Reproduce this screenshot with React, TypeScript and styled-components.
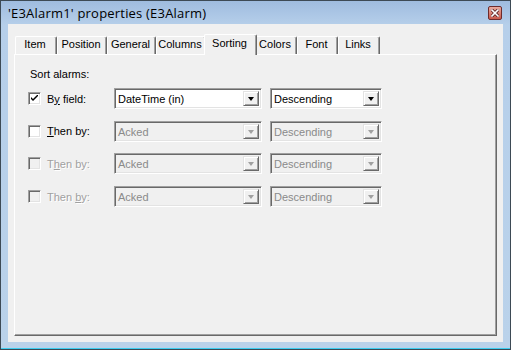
import React from 'react';
import styled, { createGlobalStyle, css } from 'styled-components';

const GlobalStyle = createGlobalStyle`
  body {
    margin: 0;
    background: #ffffff;
  }
`;

const Window = styled.div`
  box-sizing: border-box;
  width: 511px;
  height: 350px;
  border: 1px solid #3d4a55;
  background: linear-gradient(to bottom, #9fbcdf 0px, #b6cfea 24px, #bad2ea 100%);
  box-shadow: inset 0 -1px 0 #3ccdf0;
  display: flex;
  flex-direction: column;
`;

const TitleBar = styled.div`
  height: 23px;
  display: flex;
  align-items: center;
  justify-content: space-between;
  padding: 0 8px 0 7px;
`;

const Title = styled.span`
  font-family: 'Open Sans', 'Noto Sans', sans-serif;
  font-size: 13px;
  letter-spacing: 0.2px;
  color: #000;
  margin-top: 1px;
`;

const CloseButton = styled.div`
  width: 14px;
  height: 14px;
  box-sizing: border-box;
  border: 1px solid #6e2b2b;
  border-radius: 2px;
  background: linear-gradient(to bottom, #e9aa9e, #c95a4c);
  display: flex;
  align-items: center;
  justify-content: center;
  margin-top: 1px;
`;

const Client = styled.div`
  flex: 1;
  margin: 0 7px 7px 7px;
  background: #f0f0f0;
  padding: 10px 6px 6px 6px;
  display: flex;
  flex-direction: column;
`;

const TabStrip = styled.div`
  height: 20px;
  display: flex;
  align-items: flex-end;
  padding-left: 1px;
  position: relative;
  z-index: 1;
`;

const Tab = styled.div<{ $width: number; $active?: boolean }>`
  box-sizing: border-box;
  width: ${(p) => p.$width}px;
  height: 18px;
  border-top: 1px solid #ffffff;
  border-left: 1px solid #ffffff;
  border-right: 1px solid #696969;
  border-radius: 2px 2px 0 0;
  box-shadow: inset -1px 0 0 #a0a0a0;
  background: #f0f0f0;
  font-family: 'Liberation Sans', Arial, sans-serif;
  font-size: 11px;
  color: #000;
  text-align: center;
  line-height: 15px;
  padding-right: 2px;
  ${(p) =>
    p.$active &&
    css`
      width: ${p.$width + 4}px;
      height: 21px;
      margin: 0 -2px -1px -2px;
      line-height: 16px;
      position: relative;
    `}
`;

const Panel = styled.div`
  flex: 1;
  border: 1px solid;
  border-color: #ffffff #696969 #696969 #ffffff;
  box-shadow: inset -1px -1px 0 #a0a0a0;
  padding: 13px 0 0 15px;
  display: flex;
  flex-direction: column;
  font-family: 'Liberation Sans', Arial, sans-serif;
  font-size: 11px;
  color: #000;
`;

const SectionLabel = styled.div`
  line-height: 13px;
  margin-bottom: 7px;
`;

const Rows = styled.div`
  display: flex;
  flex-direction: column;
  gap: 11.7px;
  margin-left: -2px;
`;

const Row = styled.div`
  display: grid;
  grid-template-columns: 13px 73px 148px 120px;
  align-items: center;
  height: 21px;
`;

const sunken = css`
  box-sizing: border-box;
  border: 1px solid;
  border-color: #a0a0a0 #ffffff #ffffff #a0a0a0;
  box-shadow: inset 1px 1px 0 #696969, inset -1px -1px 0 #e3e3e3;
`;

const CheckBox = styled.div<{ $disabled?: boolean }>`
  ${sunken};
  width: 13px;
  height: 13px;
  background: ${(p) => (p.$disabled ? '#f0f0f0' : '#ffffff')};
  display: flex;
  align-items: center;
  justify-content: center;
`;

const Label = styled.label<{ $disabled?: boolean }>`
  margin-left: 6px;
  white-space: nowrap;
  color: ${(p) => (p.$disabled ? '#a0a0a0' : '#000000')};
  text-shadow: ${(p) => (p.$disabled ? '1px 1px 0 #ffffff' : 'none')};
`;

const Combo = styled.div<{ $disabled?: boolean }>`
  ${sunken};
  height: 21px;
  padding: 2px;
  display: flex;
  align-items: stretch;
  background: ${(p) => (p.$disabled ? '#f0f0f0' : '#ffffff')};
  color: ${(p) => (p.$disabled ? '#8a8a8a' : '#000000')};
  & + & {
    margin-left: 8px;
  }
`;

const ComboText = styled.span`
  flex: 1;
  padding-left: 1px;
  line-height: 17px;
  white-space: nowrap;
  overflow: hidden;
`;

const DropButton = styled.div<{ $disabled?: boolean }>`
  box-sizing: border-box;
  width: 16px;
  border: 1px solid;
  border-color: #e3e3e3 #696969 #696969 #e3e3e3;
  box-shadow: inset 1px 1px 0 #ffffff, inset -1px -1px 0 #a0a0a0;
  background: #f0f0f0;
  display: flex;
  align-items: center;
  justify-content: center;
  &::after {
    content: '';
    width: 0;
    height: 0;
    border-left: 3.5px solid transparent;
    border-right: 3.5px solid transparent;
    border-top: 4px solid ${(p) => (p.$disabled ? '#a0a0a0' : '#000000')};
    margin-top: 1px;
  }
`;

const tabs = [
  { name: 'Item', width: 42 },
  { name: 'Position', width: 50 },
  { name: 'General', width: 49 },
  { name: 'Columns', width: 50 },
  { name: 'Sorting', width: 49, active: true },
  { name: 'Colors', width: 42 },
  { name: 'Font', width: 41 },
  { name: 'Links', width: 42 }
];

interface SortRow {
  label: React.ReactNode;
  checked: boolean;
  checkDisabled: boolean;
  comboDisabled: boolean;
  field: string;
}

const rows: SortRow[] = [
  { label: <>B<u>y</u> field:</>, checked: true, checkDisabled: false, comboDisabled: false, field: 'DateTime (in)' },
  { label: <><u>T</u>hen by:</>, checked: false, checkDisabled: false, comboDisabled: true, field: 'Acked' },
  { label: <>T<u>h</u>en by:</>, checked: false, checkDisabled: true, comboDisabled: true, field: 'Acked' },
  { label: <>Then <u>b</u>y:</>, checked: false, checkDisabled: true, comboDisabled: true, field: 'Acked' }
];

function CheckMark() {
  return (
    <svg width="7" height="7" viewBox="0 0 7 7">
      <path d="M0 2 L0 4 L2 6 L7 1 L7 -1 L2 4 Z" fill="#000" />
    </svg>
  );
}

export default function App() {
  return (
    <>
      <GlobalStyle />
      <Window>
        <TitleBar>
          <Title>'E3Alarm1' properties (E3Alarm)</Title>
          <CloseButton>
            <svg width="8" height="8" viewBox="0 0 8 8">
              <path
                d="M1 1 L7 7 M7 1 L1 7"
                stroke="#5a2020"
                strokeWidth="3.2"
                strokeLinecap="square"
              />
              <path
                d="M1 1 L7 7 M7 1 L1 7"
                stroke="#ffffff"
                strokeWidth="1.6"
                strokeLinecap="square"
              />
            </svg>
          </CloseButton>
        </TitleBar>
        <Client>
          <TabStrip>
            {tabs.map((t) => (
              <Tab key={t.name} $width={t.width} $active={t.active}>
                {t.name}
              </Tab>
            ))}
          </TabStrip>
          <Panel>
            <SectionLabel>Sort alarms:</SectionLabel>
            <Rows>
              {rows.map((r, i) => (
                <Row key={i}>
                  <CheckBox $disabled={r.checkDisabled}>
                    {r.checked && <CheckMark />}
                  </CheckBox>
                  <Label $disabled={r.checkDisabled}>{r.label}</Label>
                  <Combo $disabled={r.comboDisabled}>
                    <ComboText>{r.field}</ComboText>
                    <DropButton $disabled={r.comboDisabled} />
                  </Combo>
                  <Combo $disabled={r.comboDisabled}>
                    <ComboText>Descending</ComboText>
                    <DropButton $disabled={r.comboDisabled} />
                  </Combo>
                </Row>
              ))}
            </Rows>
          </Panel>
        </Client>
      </Window>
    </>
  );
}
